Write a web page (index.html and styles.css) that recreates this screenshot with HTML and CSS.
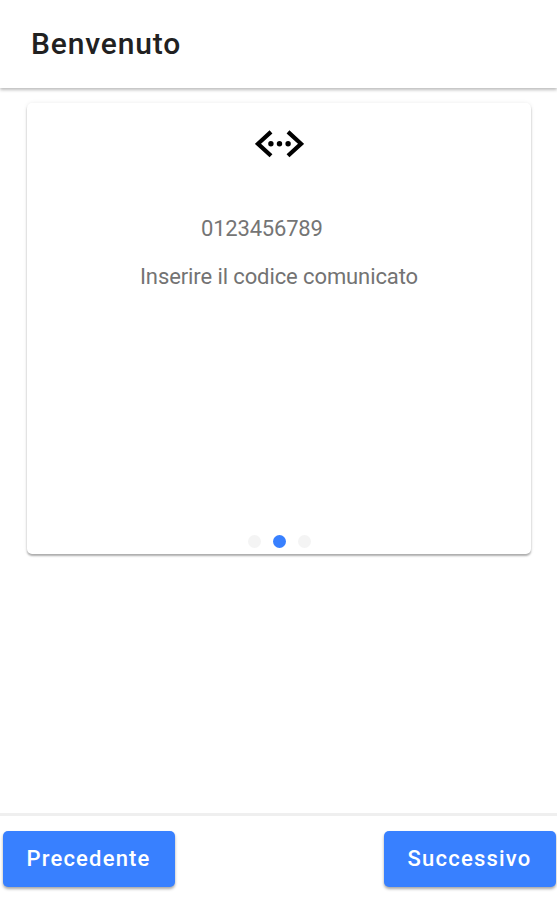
FILE: index.html
```html
<!DOCTYPE html>
<html lang="it">

<head>
  <meta charset="UTF-8" />
  <meta name="viewport" content="width=device-width, initial-scale=1.0" />
  <title>Benvenuto</title>
  <link rel="stylesheet" href="styles.css">
</head>

<body>
  <header class="toolbar">
    <h1>Benvenuto</h1>
  </header>

  <main>
    <section class="card">
      <svg class="icon" viewBox="0 0 49 28" width="49" height="28">
        <path d="M16 1.9 L3 13.8 L16 25.7 M33 1.9 L46 13.8 L33 25.7" fill="none" stroke="#000" stroke-width="4.2" />
        <circle cx="15.9" cy="13.8" r="2.7" />
        <circle cx="24.5" cy="13.8" r="2.7" />
        <circle cx="33.1" cy="13.8" r="2.7" />
      </svg>
      <input class="code" type="text" placeholder="0123456789" />
      <p class="hint">Inserire il codice comunicato</p>
      <div class="pager">
        <span class="dot"></span>
        <span class="dot active"></span>
        <span class="dot"></span>
      </div>
    </section>
  </main>

  <footer class="footer">
    <button type="button">Precedente</button>
    <button type="button">Successivo</button>
  </footer>
</body>

</html>
```
FILE: styles.css
```css
* {
  box-sizing: border-box;
}

body {
  font-family: Roboto, sans-serif;
  background: #fff;
  display: flex;
  flex-direction: column;
  height: 100vh;
  margin: 0;
}

.toolbar {
  height: 88px;
  padding: 0 31px;
  display: flex;
  align-items: center;
  box-shadow: 0 2px 3px rgba(0, 0, 0, 0.26);
}

h1 {
  margin: 0;
  font-size: 30px;
  font-weight: 500;
  line-height: 36px;
  letter-spacing: 0.85px;
  color: #212121;
}

main {
  flex: 1;
  padding: 15px 26px 0 27px;
}

.card {
  height: 451px;
  padding: 27px 0 6px;
  border-radius: 5px;
  display: flex;
  flex-direction: column;
  align-items: center;
  box-shadow: 0 2px 2px rgba(0, 0, 0, 0.3), 0 0 4px rgba(0, 0, 0, 0.08);
}

.code {
  width: 156px;
  height: 30px;
  margin-top: 55px;
  padding: 0;
  border: none;
  font: 22px Roboto, sans-serif;
  letter-spacing: -0.2px;
}

.code::placeholder {
  color: #757575;
}

.hint {
  margin: 21px 0 0;
  font-size: 22px;
  line-height: 26px;
  letter-spacing: -0.1px;
  color: #737373;
}

.pager {
  margin-top: auto;
  display: flex;
  gap: 12px;
}

.dot {
  width: 13px;
  height: 13px;
  border-radius: 50%;
  background: #f4f4f4;
}

.dot.active {
  background: #3880ff;
}

.footer {
  height: 87px;
  padding: 15px 1px 0 3px;
  border-top: 3px solid #efefef;
  display: flex;
  justify-content: space-between;
}

button {
  width: 172px;
  height: 56px;
  padding: 0 1px 2px 0;
  border: none;
  border-radius: 5px;
  background: #3880ff;
  color: #fff;
  font: 500 22px Roboto, sans-serif;
  letter-spacing: 1.2px;
  box-shadow: 0 2px 3px rgba(0, 0, 0, 0.35);
}
```
